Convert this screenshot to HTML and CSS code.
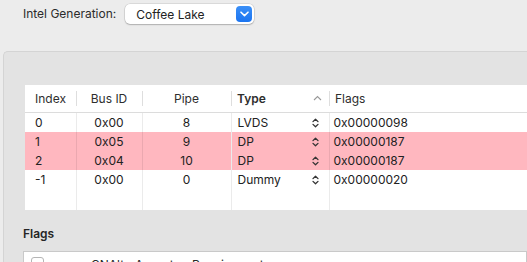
FILE: index.html
```html
<!DOCTYPE html>
<html lang="en">
<head>
    <meta charset="UTF-8">
    <title>Framebuffer Patcher</title>
    <link rel="stylesheet" href="styles.css">
</head>
<body>
    <div class="toolbar">
        <label class="gen-label">Intel Generation:</label>
        <div class="popup">
            <span class="popup-text">Coffee Lake</span>
            <span class="popup-btn">
                <svg width="9" height="6" viewBox="0 0 9 6"><path d="M1 1.2 L4.5 4.6 L8 1.2" fill="none" stroke="#fff" stroke-width="1.6" stroke-linecap="round" stroke-linejoin="round"/></svg>
            </span>
        </div>
    </div>

    <div class="panel">
        <div class="table-wrap">
            <table class="ports">
                <colgroup>
                    <col style="width:51px">
                    <col style="width:66px">
                    <col style="width:89px">
                    <col style="width:98px">
                    <col>
                </colgroup>
                <thead>
                    <tr>
                        <th class="left">Index</th>
                        <th class="sep">Bus ID</th>
                        <th class="sep">Pipe</th>
                        <th class="sep left bold">Type<span class="sort">
                            <svg width="9" height="6" viewBox="0 0 9 6"><path d="M1 5 L4.5 1.5 L8 5" fill="none" stroke="#999" stroke-width="1.1"/></svg>
                        </span></th>
                        <th class="sep left">Flags</th>
                    </tr>
                </thead>
                <tbody>
                    <tr>
                        <td class="left">0</td><td>0x00</td><td>8</td>
                        <td class="type">LVDS<span class="updown"></span></td>
                        <td class="left">0x00000098</td>
                    </tr>
                    <tr class="hl">
                        <td class="left">1</td><td>0x05</td><td>9</td>
                        <td class="type">DP<span class="updown"></span></td>
                        <td class="left">0x00000187</td>
                    </tr>
                    <tr class="hl">
                        <td class="left">2</td><td>0x04</td><td>10</td>
                        <td class="type">DP<span class="updown"></span></td>
                        <td class="left">0x00000187</td>
                    </tr>
                    <tr>
                        <td class="left">-1</td><td>0x00</td><td>0</td>
                        <td class="type">Dummy<span class="updown"></span></td>
                        <td class="left">0x00000020</td>
                    </tr>
                    <tr class="filler">
                        <td></td><td></td><td></td><td></td><td></td>
                    </tr>
                </tbody>
            </table>
        </div>

        <h4 class="section-title">Flags</h4>
        <div class="flag-list">
            <div class="flag-row">
                <span class="check"></span>
                <span class="flag-name">CNAlterAppertureRequirements</span>
            </div>
        </div>
    </div>

    <script>
        // 上下矢印アイコンを各セルに入れる
        document.querySelectorAll('.updown').forEach(el => {
            el.innerHTML = '<svg width="7" height="10" viewBox="0 0 7 10"><path d="M1 3.6 L3.5 1.2 L6 3.6 M1 6.4 L3.5 8.8 L6 6.4" fill="none" stroke="#333" stroke-width="1.3" stroke-linecap="round" stroke-linejoin="round"/></svg>';
        });
    </script>
</body>
</html>
```

FILE: styles.css
```css
body {
    margin: 0;
    background: #ececec;
    font-family: 'Inter', 'Helvetica Neue', 'Liberation Sans', sans-serif;
    font-size: 12px;
    color: #262626;
    overflow: hidden;
    height: 262px;
}
.toolbar {
    display: flex;
    gap: 9px;
    padding: 4px 0 0 23px;
    height: 47px;
    align-items: flex-start;
}
.gen-label {
    line-height: 20px;
    color: #2b2b2b;
}
.popup {
    display: flex;
    align-items: center;
    justify-content: space-between;
    width: 129px;
    height: 20px;
    box-sizing: border-box;
    padding: 0 2px 0 11px;
    background: #fff;
    border-radius: 5px;
    box-shadow: 0 0 0 0.5px rgba(0,0,0,0.15), 0 1px 1.5px rgba(0,0,0,0.2);
}
.popup-text {
    color: #222;
}
.popup-btn {
    display: flex;
    align-items: center;
    justify-content: center;
    width: 16px;
    height: 16px;
    border-radius: 4px;
    background: linear-gradient(#3a8ff7, #1b74f0);
}
.panel {
    margin-left: 3px;
    background: #e3e3e3;
    border-top: 1px solid #d4d4d4;
    border-left: 1px solid #d4d4d4;
    border-top-left-radius: 5px;
    padding: 33px 0 0 21px;
    height: 300px;
}
.table-wrap {
    background: #fff;
    height: 125px;
    overflow: hidden;
}
.ports {
    width: 100%;
    border-collapse: collapse;
    table-layout: fixed;
}
.ports th {
    position: relative;
    height: 27px;
    padding: 0;
    font-weight: normal;
    text-align: center;
    color: #2e2e2e;
    border-bottom: 1px solid #dcdcdc;
}
.ports th.bold {
    font-weight: 600;
}
.ports th.sep::before {
    content: "";
    position: absolute;
    left: 0;
    top: 6px;
    bottom: 6px;
    width: 1px;
    background: #dedede;
}
.ports .left {
    text-align: left;
    padding-left: 10px;
}
.ports th.sep.left {
    padding-left: 6px;
}
.sort {
    position: absolute;
    right: 7px;
    top: 10px;
    line-height: 0;
}
.ports td {
    height: 19px;
    padding: 0;
    text-align: center;
    color: #222;
    border-left: 1px solid rgba(0,0,0,0.08);
}
.ports td:first-child {
    border-left: none;
}
.ports td.type {
    text-align: left;
    padding-left: 6px;
    position: relative;
}
.ports td:last-child.left {
    padding-left: 4px;
}
.updown {
    position: absolute;
    right: 10px;
    top: 5px;
    line-height: 0;
}
.ports tr.hl td {
    background: #ffb7bf;
}
.ports tr.filler td {
    height: 22px;
}
.section-title {
    margin: 16px 0 0 -2px;
    font-size: 12px;
    font-weight: 600;
    line-height: 16px;
    color: #262626;
}
.flag-list {
    margin: 9px 0 0 -2px;
    background: #fff;
    border: 1px solid #c9c9c9;
    height: 60px;
}
.flag-row {
    display: flex;
    align-items: flex-start;
    padding: 5px 0 0 7px;
}
.check {
    width: 11px;
    height: 11px;
    border: 1px solid #b5b5b5;
    border-radius: 3px;
    background: #fff;
}
.flag-name {
    margin-left: 47px;
    line-height: 14px;
    margin-top: 1px;
}
```
